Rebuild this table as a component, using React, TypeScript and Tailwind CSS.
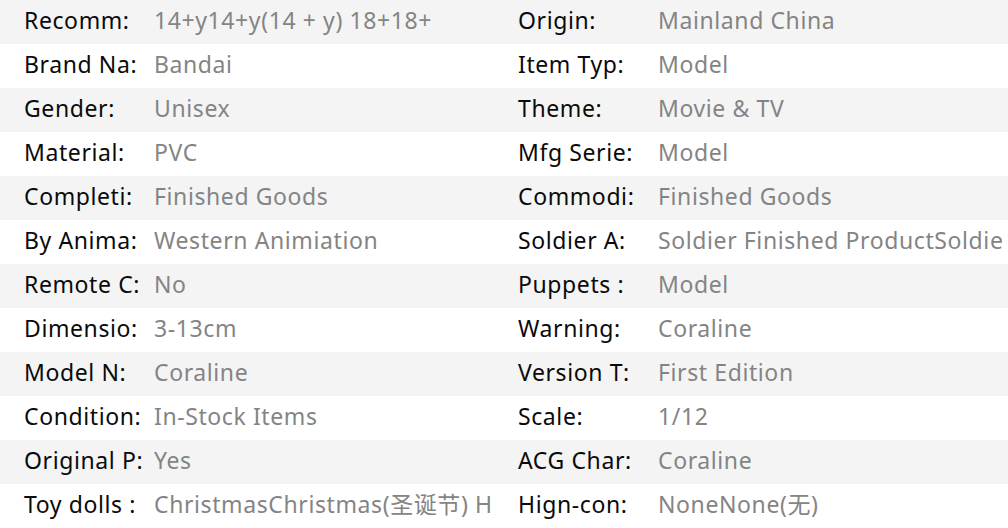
import React from "react";

const ROWS: [string, string, string, string][] = [
    ["Recomm:", "14+y14+y(14 + y) 18+18+", "Origin:", "Mainland China"],
    ["Brand Na:", "Bandai", "Item Typ:", "Model"],
    ["Gender:", "Unisex", "Theme:", "Movie & TV"],
    ["Material:", "PVC", "Mfg Serie:", "Model"],
    ["Completi:", "Finished Goods", "Commodi:", "Finished Goods"],
    ["By Anima:", "Western Animiation", "Soldier A:", "Soldier Finished ProductSoldie"],
    ["Remote C:", "No", "Puppets :", "Model"],
    ["Dimensio:", "3-13cm", "Warning:", "Coraline"],
    ["Model N:", "Coraline", "Version T:", "First Edition"],
    ["Condition:", "In-Stock Items", "Scale:", "1/12"],
    ["Original P:", "Yes", "ACG Char:", "Coraline"],
    ["Toy dolls :", "ChristmasChristmas(圣诞节) H", "Hign-con:", "NoneNone(无)"],
];

export default function App() {
    return (
        <div
            className="w-[1008px] h-[528px] overflow-hidden bg-white text-[23px] tracking-[0.6px]"
            style={{ fontFamily: '"Noto Sans", "Noto Sans CJK SC", sans-serif' }}
        >
            {ROWS.map((row, i) => (
                <div
                    key={i}
                    className={`flex items-center h-[44px] pb-[4px] whitespace-nowrap ${i % 2 === 0 ? "bg-[#f4f4f4]" : "bg-white"}`}
                >
                    <div className="w-[154px] shrink-0 pl-6 overflow-hidden text-[#0a0a0a]">{row[0]}</div>
                    <div className="w-[350px] shrink-0 overflow-hidden text-[#848484]">{row[1]}</div>
                    <div className="w-[154px] shrink-0 pl-[14px] overflow-hidden text-[#0a0a0a]">{row[2]}</div>
                    <div className="flex-1 overflow-hidden text-[#848484]">{row[3]}</div>
                </div>
            ))}
        </div>
    );
}
